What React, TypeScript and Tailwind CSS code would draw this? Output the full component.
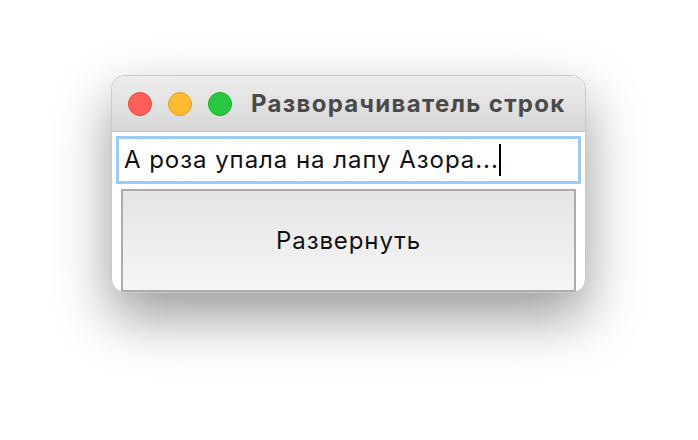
export default function App() {
  return (
    <div
      className="w-[698px] h-[440px] bg-white pt-[75px] pl-[111px]"
      style={{ fontFamily: 'Inter, "Liberation Sans", Arial, sans-serif' }}
    >
      {/* Window */}
      <div className="w-[475px] h-[218px] rounded-[14px] bg-white overflow-hidden flex flex-col border border-[#c9c9c9] shadow-[0_24px_55px_rgba(0,0,0,0.4)]">
        {/* Title bar */}
        <div className="h-[56px] shrink-0 flex items-center px-[16px] bg-gradient-to-b from-[#ededed] to-[#d7d7d7] border-b border-[#c2c2c2]">
          <div className="flex items-center gap-[16px]">
            <span className="w-[24px] h-[24px] rounded-full bg-[#ff5f57] border border-[#e0443e]" />
            <span className="w-[24px] h-[24px] rounded-full bg-[#febc2e] border border-[#dea123]" />
            <span className="w-[24px] h-[24px] rounded-full bg-[#28c840] border border-[#1aab29]" />
          </div>
          <span className="ml-[19px] text-[24px] font-bold text-[#4a4a4a] tracking-[1.3px]">
            Разворачиватель строк
          </span>
        </div>

        {/* Content */}
        <div className="flex-1 flex flex-col px-[4px] pt-[4px]">
          <div className="h-[48px] border-[3px] border-[#9ccbf6] bg-white flex items-center pl-[5px]">
            <span className="text-[24px] text-[#111] tracking-[0.95px]">А роза упала на лапу Азора...</span>
            <span className="w-[2px] h-[32px] bg-black" />
          </div>
          <div className="mt-[5px] mx-[5px] flex-1 border-2 border-[#acacac] bg-gradient-to-b from-[#e5e5e5] to-[#f5f5f5] flex items-center justify-center">
            <span className="text-[24px] text-[#111] tracking-[0.9px]">Развернуть</span>
          </div>
        </div>
      </div>
    </div>
  );
}
